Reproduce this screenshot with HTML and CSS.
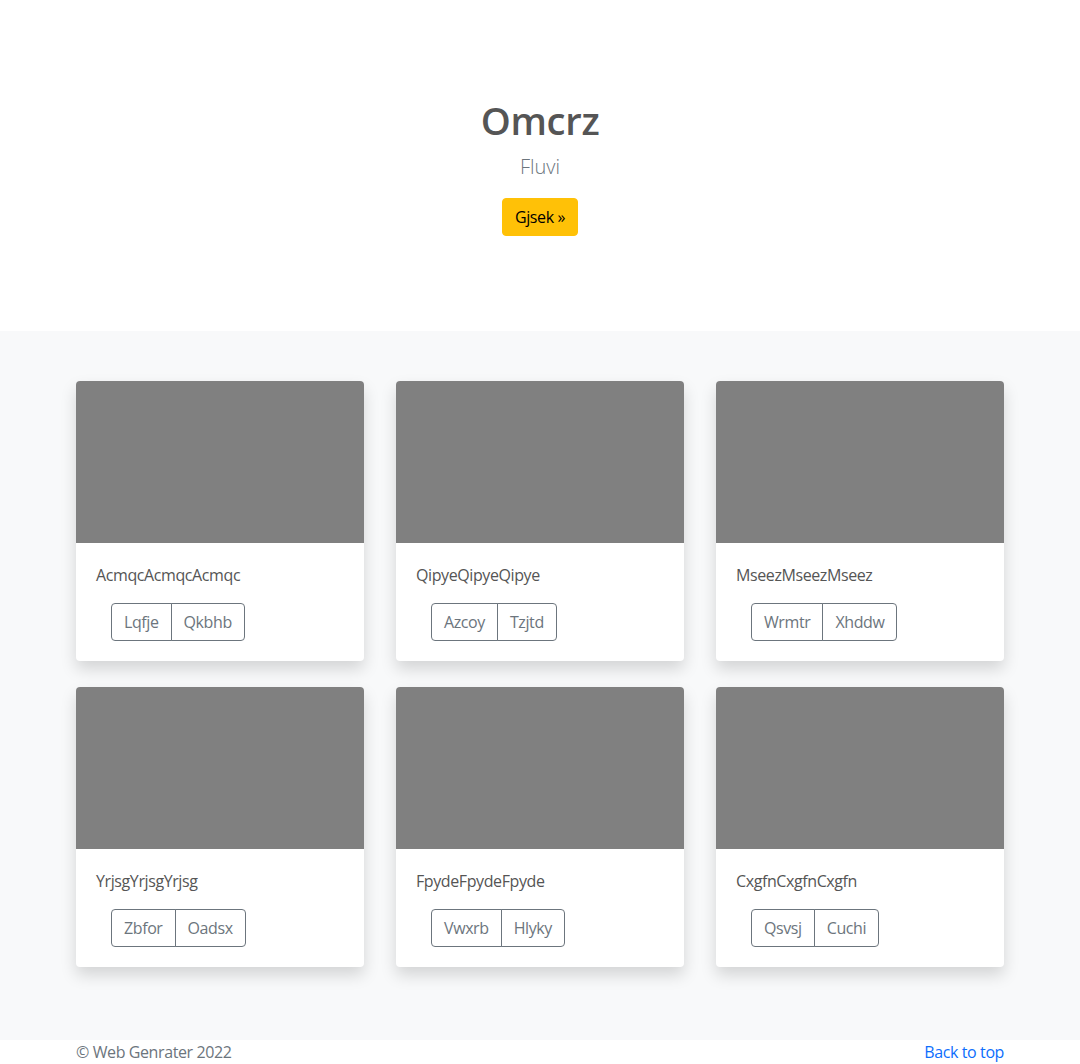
FILE: index.html
```html
<!DOCTYPE html>
<html lang="en">
<head>
<meta charset="utf-8">
<title>Omcrz</title>
<link rel="stylesheet" href="styles.css">
</head>
<body>
<main>
  <section class="hero">
    <h1 class="hero-title">Omcrz</h1>
    <p class="lead">Fluvi</p>
    <p class="hero-actions"><a href="#" class="btn btn-warning">Gjsek »</a></p>
  </section>

  <div class="album">
    <div class="grid">
      <div class="card">
        <div class="thumb"></div>
        <div class="card-body">
          <p class="card-text">AcmqcAcmqcAcmqc</p>
          <div class="btn-group"><button class="btn btn-outline">Lqfje</button><button class="btn btn-outline">Qkbhb</button></div>
        </div>
      </div>
      <div class="card">
        <div class="thumb"></div>
        <div class="card-body">
          <p class="card-text">QipyeQipyeQipye</p>
          <div class="btn-group"><button class="btn btn-outline">Azcoy</button><button class="btn btn-outline">Tzjtd</button></div>
        </div>
      </div>
      <div class="card">
        <div class="thumb"></div>
        <div class="card-body">
          <p class="card-text">MseezMseezMseez</p>
          <div class="btn-group"><button class="btn btn-outline">Wrmtr</button><button class="btn btn-outline">Xhddw</button></div>
        </div>
      </div>
      <div class="card">
        <div class="thumb"></div>
        <div class="card-body">
          <p class="card-text">YrjsgYrjsgYrjsg</p>
          <div class="btn-group"><button class="btn btn-outline">Zbfor</button><button class="btn btn-outline">Oadsx</button></div>
        </div>
      </div>
      <div class="card">
        <div class="thumb"></div>
        <div class="card-body">
          <p class="card-text">FpydeFpydeFpyde</p>
          <div class="btn-group"><button class="btn btn-outline">Vwxrb</button><button class="btn btn-outline">Hlyky</button></div>
        </div>
      </div>
      <div class="card">
        <div class="thumb"></div>
        <div class="card-body">
          <p class="card-text">CxgfnCxgfnCxgfn</p>
          <div class="btn-group"><button class="btn btn-outline">Qsvsj</button><button class="btn btn-outline">Cuchi</button></div>
        </div>
      </div>
    </div>
  </div>
</main>

<footer class="footer">
  <div class="footer-inner">
    <a href="#" class="back-top">Back to top</a>
    <p class="copy">© Web Genrater 2022</p>
  </div>
</footer>
</body>
</html>
```

FILE: styles.css
```css
* { box-sizing: border-box; }

body {
  margin: 0;
  font-family: "Open Sans", "Noto Sans", "Liberation Sans", sans-serif;
  font-size: 16px;
  line-height: 1.5;
  letter-spacing: -0.4px;
  color: #555;
  background: #fff;
}

.hero {
  text-align: center;
  padding: 98px 0 95px;
}

.hero-title {
  margin: 0 0 8px;
  font-size: 38.2px;
  line-height: 1.2;
  font-weight: 600;
  letter-spacing: -0.3px;
  color: #555;
}

.lead {
  margin: 0 0 16px;
  font-size: 20px;
  font-weight: 300;
  line-height: 1.5;
  letter-spacing: 0;
  color: #6c757d;
}

.hero-actions {
  margin: 0;
}

.btn {
  display: inline-block;
  font-family: inherit;
  font-size: 16px;
  line-height: 24px;
  letter-spacing: -0.4px;
  padding: 6px 12px;
  border: 1px solid transparent;
  border-radius: 4px;
  text-decoration: none;
  cursor: pointer;
  background: transparent;
}

.btn-warning {
  background: #ffc107;
  border-color: #ffc107;
  color: #000;
}

.album {
  background: #f8f9fa;
  padding: 50px 0 73px;
}

.grid {
  width: 928px;
  margin: 0 auto;
  display: grid;
  grid-template-columns: repeat(3, 288px);
  column-gap: 32px;
  row-gap: 26px;
}

.card {
  background: #fff;
  border-radius: 4px;
  overflow: hidden;
  box-shadow: 0 8px 16px rgba(0, 0, 0, 0.15);
}

.thumb {
  height: 162px;
  background: #808080;
}

.card-body {
  padding: 20px;
}

.card-text {
  margin: 0 0 16px;
  color: #555;
}

.btn-group {
  display: inline-flex;
  margin-left: 15px;
}

.btn-outline {
  color: #6c757d;
  border-color: #6c757d;
}

.btn-group .btn-outline:first-child {
  border-top-right-radius: 0;
  border-bottom-right-radius: 0;
}

.btn-group .btn-outline:last-child {
  margin-left: -1px;
  border-top-left-radius: 0;
  border-bottom-left-radius: 0;
}

.footer {
  color: #6c757d;
}

.footer-inner {
  width: 928px;
  margin: 0 auto;
}

.back-top {
  float: right;
  color: #0d6efd;
  text-decoration: none;
}

.copy {
  margin: 0;
}
```
